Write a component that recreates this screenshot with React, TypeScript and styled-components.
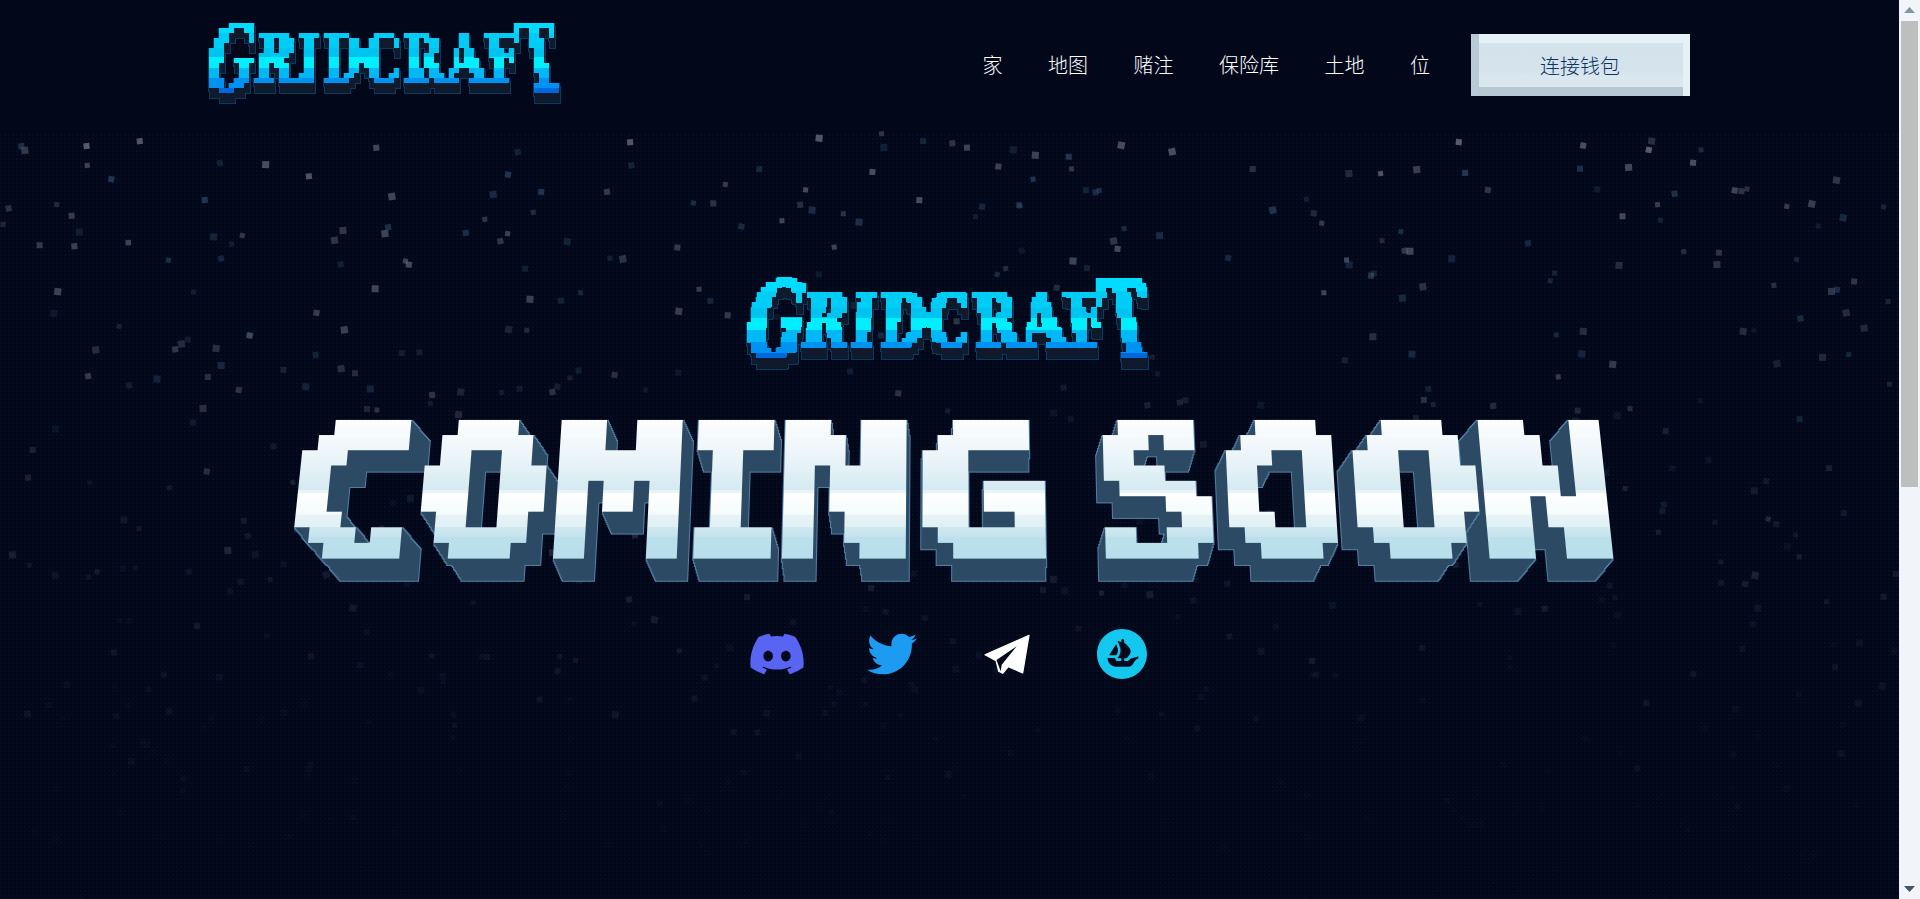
import React, { useMemo } from "react";
import styled, { createGlobalStyle } from "styled-components";
import { FaDiscord, FaTwitter } from "react-icons/fa";
import { SiOpensea } from "react-icons/si";

const GlobalStyle = createGlobalStyle`
  html { background: #02081a; }
  body { margin: 0; background: #02081a; font-family: "Noto Sans CJK SC", "Liberation Sans", sans-serif; }
`;

const Page = styled.div`
  position: relative;
  width: calc(100% - 21px);
  min-height: 1653px;
  overflow: hidden;
  background-color: #02081a;
`;

const ScrollRail = styled.div`
  position: fixed;
  top: 0;
  right: 0;
  bottom: 0;
  z-index: 5000;
  width: 21px;
  display: flex;
  flex-direction: column;
  align-items: center;
  background: #f1f4f8;
`;

const ScrollArrow = styled.svg<{ $down?: boolean }>`
  flex: none;
  width: 21px;
  height: 21px;
  transform: ${(p) => (p.$down ? "rotate(180deg)" : "none")};
`;

const ScrollThumb = styled.div`
  flex: none;
  width: 17px;
  height: 466px;
  background: #bdbfbf;
`;

const ScrollSpacer = styled.div`
  flex: 1;
`;

const Sky = styled.svg`
  position: absolute;
  left: 0;
  top: 130px;
  width: 100%;
  height: 769px;
`;

const DotGrid = styled.div`
  position: absolute;
  left: 0;
  right: 0;
  top: 134px;
  height: 765px;
  background-image: radial-gradient(circle at 1px 1px, rgba(70, 100, 140, 0.07) 0.7px, transparent 1px);
  background-size: 4px 4px;
`;

const Header = styled.header`
  position: relative;
  height: 130px;
  width: 1480px;
  margin: 0 auto;
  display: flex;
  align-items: flex-start;
  justify-content: space-between;
`;

const HeaderLogo = styled.div`
  margin: 3px 0 0 -36px;
`;

const Nav = styled.nav`
  display: flex;
  align-items: center;
  height: 62px;
  margin-top: 34px;
`;

const NavLink = styled.a`
  color: #ffffff;
  font-size: 20px;
  font-weight: 300;
  line-height: 28px;
  margin-right: 45.5px;
  white-space: nowrap;
`;

const WalletButton = styled.button`
  width: 219px;
  height: 62px;
  margin-left: -5px;
  border: 0;
  padding: 0;
  color: #0b3560;
  font: 300 20px "Noto Sans CJK SC", sans-serif;
  background: linear-gradient(180deg, #d3e2eb 0%, #d5e3ec 60%, #dbe7ef 68%, #dbe7ef 100%);
  box-shadow: inset 8px 0 0 #b9cad6, inset -7px 0 0 #e4f1f6, inset 0 -9px 0 #b7c8d4, inset 0 9px 0 #e4f1f6;
`;

const Hero = styled.main`
  position: relative;
  display: flex;
  flex-direction: column;
  align-items: center;
  padding-top: 127px;
`;

const HeroLogo = styled.div`
  width: 420px;
  height: 164px;
  display: flex;
  justify-content: center;
  transform: scale(1.138);
  transform-origin: 50% 0;
`;

const TitleRow = styled.h1`
  display: flex;
  height: 135px;
  margin: 0 0 0 -5px;
  font: 700 185px/142px "DejaVu Sans Mono", monospace;
  transform: perspective(2000px) rotateX(18deg) scale(1.02, 1.08);
`;

const TitleLetter = styled.span<{ $w: number; $gap: number; $z: number; $id: string }>`
  flex: none;
  width: ${(p) => p.$w}px;
  height: 135px;
  margin-right: ${(p) => p.$gap}px;
  z-index: ${(p) => p.$z};
  display: flex;
  justify-content: center;
  filter: url(#${(p) => p.$id});
`;

const TitleGlyph = styled.span<{ $sx: number }>`
  flex: none;
  display: block;
  color: #fff;
  transform: scaleX(${(p) => p.$sx});
`;

const Socials = styled.div`
  display: flex;
  gap: 65px;
  margin-top: 73px;
`;

const SocialLink = styled.a<{ $color: string; $size: number }>`
  width: 50px;
  height: 50px;
  display: flex;
  align-items: center;
  justify-content: center;
  color: ${(p) => p.$color};
  font-size: ${(p) => p.$size}px;
  & > svg { flex: none; }
`;

const HiddenDefs = styled.svg`
  position: absolute;
  width: 0;
  height: 0;
`;

const LogoFilterBox = styled.div`
  width: 420px;
  height: 120px;
  filter: url(#logo-pixel);
`;

const LogoWord = styled.div`
  display: flex;
  align-items: center;
  justify-content: center;
  width: 420px;
  height: 110px;
  color: #fff;
  font-family: "DejaVu Serif", serif;
  font-weight: 700;
  transform: perspective(420px) rotateX(28deg);
`;

const LogoLetter = styled.span<{ $fs: number; $w: number; $sx: number }>`
  flex: none;
  display: flex;
  justify-content: center;
  width: ${(p) => p.$w}px;
  font-size: ${(p) => p.$fs}px;
  line-height: 1;
  & > span { flex: none; transform: scaleX(${(p) => p.$sx}); }
`;

const TITLE = [
  { c: "C", w: 131, g: 6, sx: 1.22, fat: 1.5 },
  { c: "O", w: 120, g: 12, sx: 1.14, fat: 1 },
  { c: "M", w: 120, g: 16, sx: 1.18, fat: 3 },
  { c: "I", w: 72, g: 14, sx: 0.77, fat: 3 },
  { c: "N", w: 120, g: 16, sx: 1.2, fat: 3 },
  { c: "G", w: 118, g: 60, sx: 1.2, fat: 1.5 },
  { c: "S", w: 108, g: 13, sx: 1.08, fat: 2 },
  { c: "O", w: 115, g: 10, sx: 1.12, fat: 1 },
  { c: "O", w: 118, g: 8, sx: 1.13, fat: 1 },
  { c: "N", w: 125, g: 0, sx: 1.18, fat: 3 },
];

const BANDS: [number, string][] = [
  [0, "#fbfdfe"], [30, "#eef6f9"], [46, "#e4f2f7"], [68, "#d3e9f0"], [70, "#ffffff"], [90, "#f6fbfc"],
  [92, "#e6f2f6"], [102, "#e0f0f4"], [104, "#cfe7ef"], [112, "#c6e4ee"], [114, "#bbe0ec"], [135, "#b8dfeb"],
];

function lerpHex(a: string, b: string, t: number) {
  const pa = [1, 3, 5].map((i) => parseInt(a.slice(i, i + 2), 16));
  const pb = [1, 3, 5].map((i) => parseInt(b.slice(i, i + 2), 16));
  return `rgb(${pa.map((v, i) => Math.round(v + (pb[i] - v) * t)).join(",")})`;
}

function bandColor(y: number) {
  for (let i = 0; i < BANDS.length - 1; i++) {
    const [y0, c0] = BANDS[i];
    const [y1, c1] = BANDS[i + 1];
    if (y <= y1) return lerpHex(c0, c1, (y - y0) / Math.max(1, y1 - y0));
  }
  return BANDS[BANDS.length - 1][1];
}

function LetterFilter({ id, dx, fat }: { id: string; dx: number; fat: number }) {
  const steps = Array.from({ length: 21 }, (_, k) => k + 1);
  const rows = Array.from({ length: 45 }, (_, k) => k * 3);
  return (
    <filter
      id={id}
      x="-35%"
      y="0%"
      width="170%"
      height="125%"
      colorInterpolationFilters="sRGB"
      primitiveUnits="userSpaceOnUse"
    >
      <feFlood x="7" y="7" width="1" height="1" floodColor="#fff" />
      <feComposite x="0" y="0" width="15" height="15" />
      <feTile result="grid" />
      <feMorphology in="SourceAlpha" operator="dilate" radius={`${fat} 1`} result="fat" />
      <feComposite in="fat" in2="grid" operator="in" />
      <feComponentTransfer>
        <feFuncA type="discrete" tableValues="0 1" />
      </feComponentTransfer>
      <feMorphology operator="dilate" radius="7" result="px" />
      {steps.map((k) => (
        <feOffset key={k} in="px" dx={(dx * k) / 21} dy={k} result={`o${k}`} />
      ))}
      <feMerge result="ext">
        {steps.map((k) => (
          <feMergeNode key={k} in={`o${k}`} />
        ))}
      </feMerge>
      <feMorphology in="ext" operator="dilate" radius="1" result="extBig" />
      <feFlood floodColor="#4f7fa6" />
      <feComposite in2="extBig" operator="in" result="edge" />
      <feFlood floodColor="#2d4a64" />
      <feComposite in2="ext" operator="in" result="side" />
      {rows.map((y) => (
        <feFlood key={y} x="-100" y={y} width="400" height="3" floodColor={bandColor(y)} result={`b${y}`} />
      ))}
      <feMerge result="bands">
        {rows.map((y) => (
          <feMergeNode key={y} in={`b${y}`} />
        ))}
      </feMerge>
      <feComposite in="bands" in2="px" operator="in" result="face" />
      <feMerge>
        <feMergeNode in="edge" />
        <feMergeNode in="side" />
        <feMergeNode in="face" />
      </feMerge>
    </filter>
  );
}

const LOGO_BANDS: [number, number, string][] = [
  [0, 30, "#00dcff"],
  [30, 45, "#00cdf6"],
  [45, 54, "#00c4f0"],
  [54, 65, "#00efff"],
  [65, 75, "#00b8f5"],
  [75, 85, "#0092f0"],
  [85, 130, "#0068dc"],
];

function LogoFilter() {
  const steps = [1, 2, 3, 4, 5, 6, 7, 8, 9, 10];
  return (
    <filter id="logo-pixel" x="0" y="0" width="100%" height="100%" colorInterpolationFilters="sRGB" primitiveUnits="userSpaceOnUse">
      <feFlood x="2" y="2" width="1" height="1" floodColor="#fff" />
      <feComposite x="0" y="0" width="5" height="5" />
      <feTile result="grid" />
      <feMorphology in="SourceAlpha" operator="dilate" radius="1 0" result="fat" />
      <feComposite in="fat" in2="grid" operator="in" />
      <feComponentTransfer>
        <feFuncA type="discrete" tableValues="0 1" />
      </feComponentTransfer>
      <feMorphology operator="dilate" radius="2" result="px" />
      {steps.map((k) => (
        <feOffset key={k} in="px" dx={k / 8} dy={k} result={`lo${k}`} />
      ))}
      <feMerge result="ext">
        {steps.map((k) => (
          <feMergeNode key={k} in={`lo${k}`} />
        ))}
      </feMerge>
      <feMorphology in="ext" operator="dilate" radius="1" result="extBig" />
      <feFlood floodColor="#0b3a60" />
      <feComposite in2="extBig" operator="in" result="edge" />
      <feFlood floodColor="#101a2d" />
      <feComposite in2="ext" operator="in" result="side" />
      {LOGO_BANDS.map(([y0, y1, c]) => (
        <feFlood key={y0} x="0" y={y0} width="420" height={y1 - y0} floodColor={c} result={`lb${y0}`} />
      ))}
      <feMerge result="bands">
        {LOGO_BANDS.map(([y0]) => (
          <feMergeNode key={y0} in={`lb${y0}`} />
        ))}
      </feMerge>
      <feComposite in="bands" in2="px" operator="in" result="face" />
      <feMerge>
        <feMergeNode in="edge" />
        <feMergeNode in="side" />
        <feMergeNode in="face" />
      </feMerge>
    </filter>
  );
}

const LOGO = [
  { c: "G", fs: 104, w: 48, sx: 0.56 },
  { c: "R", fs: 73, w: 40, sx: 0.66 },
  { c: "I", fs: 73, w: 26, sx: 0.62 },
  { c: "D", fs: 73, w: 42, sx: 0.64 },
  { c: "C", fs: 73, w: 40, sx: 0.66 },
  { c: "R", fs: 73, w: 41, sx: 0.66 },
  { c: "A", fs: 73, w: 41, sx: 0.66 },
  { c: "F", fs: 73, w: 34, sx: 0.64 },
  { c: "T", fs: 104, w: 41, sx: 0.54 },
];

function Logo() {
  return (
    <LogoFilterBox>
      <LogoWord>
        {LOGO.map((l, i) => (
          <LogoLetter key={i} $fs={l.fs} $w={l.w} $sx={l.sx}>
            <span>{l.c}</span>
          </LogoLetter>
        ))}
      </LogoWord>
    </LogoFilterBox>
  );
}

function TelegramIcon() {
  return (
    <svg viewBox="0 0 50 50" width="50" height="50" aria-hidden="true">
      <path
        d="M47 6.3 3 25.7 14 31.7 16.7 42.3 20.7 44.3 26.3 37.7 40.7 44Z"
        fill="#ffffff"
        stroke="#ffffff"
        strokeWidth="1.2"
        strokeLinejoin="round"
      />
      <path d="M14.5 31 34.7 17.3 19.7 35.7 18.7 42.3Z" fill="#02081a" />
    </svg>
  );
}

function useStars() {
  return useMemo(() => {
    let s = 20240611;
    const rnd = () => {
      s = (s + 0x6d2b79f5) | 0;
      let t = Math.imul(s ^ (s >>> 15), 1 | s);
      t = (t + Math.imul(t ^ (t >>> 7), 61 | t)) ^ t;
      return ((t ^ (t >>> 14)) >>> 0) / 4294967296;
    };
    return Array.from({ length: 640 }, () => {
      const x = rnd() * 1899;
      const y = rnd() * 769;
      const fade = Math.pow(1 - y / 800, 1.5);
      return {
        x,
        y,
        size: 5 + Math.round(rnd() * 2),
        rot: rnd() * 24 - 12,
        fill: rnd() > 0.45 ? "#6f7b8c" : "#2f4d6d",
        opacity: (0.3 + rnd() * 0.45) * fade,
      };
    });
  }, []);
}

export default function App() {
  const stars = useStars();
  const NAV = ["家", "地图", "赌注", "保险库", "土地", "位"];
  let cursor = 0;
  const positions = TITLE.map((l) => {
    const c = cursor + l.w / 2;
    cursor += l.w + l.g;
    return c;
  });
  const mid = cursor / 2;
  return (
    <Page>
      <GlobalStyle />
      <HiddenDefs aria-hidden="true">
        <defs>
          {TITLE.map((l, i) => (
            <LetterFilter key={i} id={`ltr-${i}`} fat={l.fat} dx={(mid - positions[i]) * 0.034} />
          ))}
          <LogoFilter />
        </defs>
      </HiddenDefs>
      <DotGrid />
      <Sky aria-hidden="true">
        {stars.map((st, i) => (
          <rect
            key={i}
            x={st.x}
            y={st.y}
            width={st.size}
            height={st.size}
            fill={st.fill}
            opacity={st.opacity}
            transform={`rotate(${st.rot} ${st.x} ${st.y})`}
          />
        ))}
      </Sky>
      <Header>
        <HeaderLogo>
          <Logo />
        </HeaderLogo>
        <Nav>
          {NAV.map((n) => (
            <NavLink key={n}>{n}</NavLink>
          ))}
          <WalletButton>连接钱包</WalletButton>
        </Nav>
      </Header>
      <Hero>
        <HeroLogo>
          <Logo />
        </HeroLogo>
        <TitleRow>
          {TITLE.map((l, i) => (
            <TitleLetter
              key={i}
              $w={l.w}
              $gap={l.g}
              $z={1000 - Math.round(Math.abs(positions[i] - mid))}
              $id={`ltr-${i}`}
            >
              <TitleGlyph $sx={l.sx}>{l.c}</TitleGlyph>
            </TitleLetter>
          ))}
        </TitleRow>
        <Socials>
          <SocialLink $color="#5865f2" $size={58}><FaDiscord /></SocialLink>
          <SocialLink $color="#1d9bf0" $size={50}><FaTwitter /></SocialLink>
          <SocialLink $color="#ffffff" $size={50}><TelegramIcon /></SocialLink>
          <SocialLink $color="#14c7ee" $size={50}><SiOpensea /></SocialLink>
        </Socials>
      </Hero>
      <ScrollRail aria-hidden="true">
        <ScrollArrow viewBox="0 0 21 21"><path d="M10.5 7 16 13H5Z" fill="#7d97a8" /></ScrollArrow>
        <ScrollThumb />
        <ScrollSpacer />
        <ScrollArrow $down viewBox="0 0 21 21"><path d="M10.5 7 16 13H5Z" fill="#40566a" /></ScrollArrow>
      </ScrollRail>
    </Page>
  );
}
